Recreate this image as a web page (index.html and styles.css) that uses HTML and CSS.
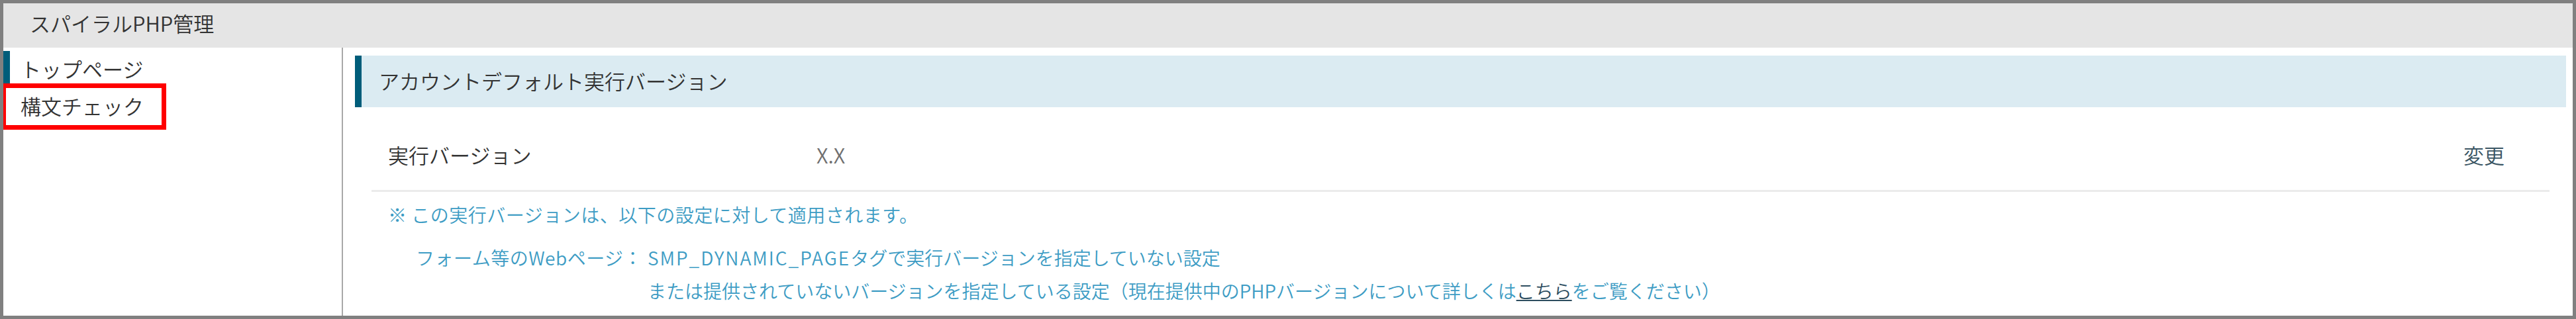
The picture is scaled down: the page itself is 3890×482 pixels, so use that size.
FILE: index.html
```html
<!DOCTYPE html>
<html lang="ja">
<head>
<meta charset="utf-8">
<title>スパイラルPHP管理</title>
<link rel="stylesheet" href="styles.css">
</head>
<body>
<div class="frame">
  <header class="app-header">スパイラルPHP管理</header>
  <div class="app-body">
    <nav class="sidebar">
      <a class="nav-item active">トップページ</a>
      <a class="nav-item">構文チェック</a>
    </nav>
    <main class="content">
      <h2 class="section-title">アカウントデフォルト実行バージョン</h2>
      <div class="setting-row">
        <div class="setting-label">実行バージョン</div>
        <div class="setting-value">X.X</div>
        <a class="setting-action">変更</a>
      </div>
      <div class="notes">
        <p class="note-lead">※ この実行バージョンは、以下の設定に対して適用されます。</p>
        <dl class="note-list">
          <dt>フォーム等のWebページ：</dt>
          <dd><span class="code-token">SMP_DYNAMIC_PAGE</span>タグで実行バージョンを指定していない設定<br>または提供されていないバージョンを指定している設定（現在提供中のPHPバージョンについて詳しくは<a class="note-link">こちら</a>をご覧ください）</dd>
        </dl>
      </div>
    </main>
  </div>
  <div class="highlight"></div>
</div>
</body>
</html>
```
FILE: styles.css
```css
* { box-sizing: border-box; }
html, body { margin: 0; padding: 0; background: #ffffff; }
body {
  font-family: "Noto Sans CJK JP", "Noto Sans", sans-serif;
  font-weight: 350;
  color: #333333;
}
.frame {
  position: relative;
  width: 3890px;
  height: 482px;
  border: 5px solid #808080;
  display: flex;
  flex-direction: column;
  overflow: hidden;
}
.app-header {
  height: 67px;
  flex: none;
  background: #e5e5e5;
  display: flex;
  align-items: center;
  padding: 0 0 8px 40px;
  font-size: 31px;
  line-height: 40px;
  color: #333333;
}
.app-body {
  flex: 1;
  display: flex;
  min-height: 0;
}
.sidebar {
  width: 513px;
  flex: none;
  border-right: 2px solid #a8a8a8;
  padding-top: 5px;
  display: flex;
  flex-direction: column;
}
.nav-item {
  height: 56px;
  display: flex;
  align-items: center;
  border-left: 10px solid transparent;
  padding: 0 0 2px 16px;
  font-size: 31px;
  line-height: 40px;
  color: #333333;
  text-decoration: none;
}
.nav-item.active { border-left-color: #005d7a; }
.content {
  flex: 1;
  padding: 12px 10px 0 18px;
  min-width: 0;
}
.section-title {
  margin: 0;
  height: 78px;
  background: #dbebf2;
  border-left: 10px solid #005d7a;
  padding: 0 0 2px 26px;
  display: flex;
  align-items: center;
  font-size: 31px;
  line-height: 40px;
  font-weight: 350;
  color: #333333;
}
.setting-row {
  margin: 24px 25px 0 25px;
  padding: 26px 68px 31px 25px;
  border-bottom: 3px solid #ebebeb;
  display: flex;
  align-items: center;
  font-size: 31px;
  line-height: 44px;
}
.setting-label {
  width: 647px;
  flex: none;
  color: #333333;
}
.setting-value {
  flex: 1;
  color: #707070;
}
.setting-action {
  color: #3a5563;
  text-decoration: none;
}
.notes {
  margin: 9px 25px 0 25px;
  padding-left: 25px;
  font-size: 28px;
  line-height: 50px;
  color: #3d9cc4;
  letter-spacing: 0.5px;
}
.note-lead { margin: 0 0 15px 0; }
.note-list {
  margin: 0;
  padding-left: 42px;
  display: grid;
  grid-template-columns: 350px 1fr;
}
.note-list dt, .note-list dd { margin: 0; }
.note-list dd { letter-spacing: 0; }
.code-token { letter-spacing: 2px; }
.note-link {
  color: #2d4d5f;
  text-decoration: underline;
}
.highlight {
  position: absolute;
  left: -3px;
  top: 121px;
  width: 249px;
  height: 70px;
  border: 7px solid #ff0000;
}
```
